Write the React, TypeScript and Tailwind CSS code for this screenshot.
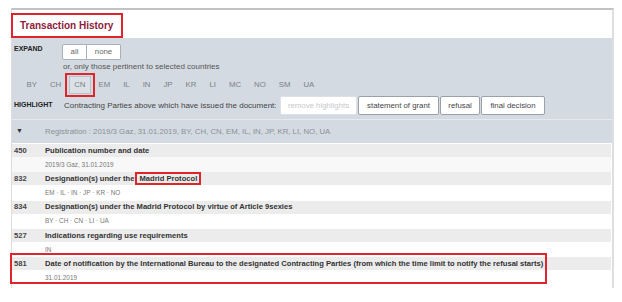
const countries = ["BY", "CH", "CN", "EM", "IL", "IN", "JP", "KR", "LI", "MC", "NO", "SM", "UA"];

const rows = [
  { code: "450", title: "Publication number and date", sub: "2019/3 Gaz, 31.01.2019" },
  { code: "832", title: "Designation(s) under the", mark: "Madrid Protocol", sub: "EM · IL · IN · JP · KR · NO" },
  { code: "834", title: "Designation(s) under the Madrid Protocol by virtue of Article 9sexies", sub: "BY · CH · CN · LI · UA" },
  { code: "527", title: "Indications regarding use requirements", sub: "IN" },
  {
    code: "581",
    title:
      "Date of notification by the International Bureau to the designated Contracting Parties (from which the time limit to notify the refusal starts)",
    sub: "31.01.2019",
    boxed: true,
  },
];

const Btn = ({ label, disabled, w }: { label: string; disabled?: boolean; w: string }) => (
  <div
    className={`${w} h-[19px] flex items-center justify-center rounded-[2px] border bg-white text-[7.8px] ${
      disabled ? "border-[#dde1e5] text-[#c4c8cc]" : "border-[#9aa1a8] text-[#444]"
    }`}
  >
    {label}
  </div>
);

export default function App() {
  return (
    <div
      className="w-[622px] h-[302px] bg-white overflow-hidden pt-[8px] pl-[11px]"
      style={{ fontFamily: '"Liberation Sans", Arial, sans-serif' }}
    >
      <div className="w-[603px] h-[280px] border-t-2 border-t-[#c2c2c2] border-l border-l-[#dcdcdc] border-r-2 border-r-[#dedede]">
        {/* title */}
        <div className="h-[28px] pt-[2px] -ml-px">
          <div className="inline-flex items-center w-[112px] h-[25px] border-2 border-[#e0242c] pl-[7px] text-[10px] font-bold text-[#8e1b3c]">
            Transaction History
          </div>
        </div>

        {/* expand / highlight panel */}
        <div className="bg-[#d4dae1] w-[600px]">
          <div className="pt-[6px] pl-[2px] flex items-start h-[22px]">
            <span className="w-[48px] text-[7px] font-bold text-[#222] leading-[10px]">EXPAND</span>
            <div className="flex">
              <div className="w-[25px] h-[16px] flex items-center justify-center bg-white border border-[#a9b0b7] rounded-l-[2px] text-[7.8px] text-[#666]">all</div>
              <div className="w-[34px] h-[16px] flex items-center justify-center bg-white border border-l-0 border-[#a9b0b7] rounded-r-[2px] text-[7.8px] text-[#666]">none</div>
            </div>
          </div>
          <div className="h-[14px] pl-[51px] pt-[2px] text-[8px] text-[#555] leading-[10px]">
            or, only those pertinent to selected countries
          </div>
          <div className="h-[20px] pl-[8px] flex items-center text-[7.8px] text-[#7a8088] mt-[1px]">
            {countries.map((c) => (
              <div key={c} className="relative px-[6.5px] h-[18px] flex items-center">
                {c === "CN" && (
                  <>
                    <div className="absolute inset-y-[0px] left-[1px] right-[1px] border border-[#b9c1ca] bg-[#dbe1e7]" />
                    <div className="absolute -inset-x-[3px] -inset-y-[3px] border-2 border-[#e0242c]" />
                  </>
                )}
                <span className="relative">{c}</span>
              </div>
            ))}
          </div>
          <div className="h-[21px] flex items-center pl-[2px]">
            <span className="w-[50px] text-[7px] font-bold text-[#222]">HIGHLIGHT</span>
            <span className="w-[216px] text-[8px] text-[#444] whitespace-nowrap">Contracting Parties above which have issued the document:</span>
            <div className="flex gap-[1px]">
              <Btn label="remove highlights" disabled w="w-[77px]" />
              <Btn label="statement of grant" w="w-[81px]" />
              <Btn label="refusal" w="w-[40px]" />
              <Btn label="final decision" w="w-[64px]" />
            </div>
          </div>
          <div className="h-[3px]" />
          <div className="h-[1px] bg-[#e6eaee]" />
          <div className="h-[23px] flex items-center pl-[4px] text-[7.8px] text-[#8a9098]">
            <span className="w-[29px] text-[7px] text-[#333]">▼</span>
            <span>Registration : 2019/3 Gaz, 31.01.2019, BY, CH, CN, EM, IL, IN, JP, KR, LI, NO, UA</span>
          </div>
        </div>

        {/* entries */}
        <div className="pt-[1px]">
          {rows.map((r, i) => (
            <div key={r.code} className="relative">
              <div className="h-[13px] w-[599px] bg-[#ececec] flex items-center pl-[2px] text-[7.6px] font-bold text-[#333] whitespace-nowrap">
                <span className="w-[31px] text-[#444]">{r.code}</span>
                <span>{r.title}</span>
                {r.mark && (
                  <span className="ml-[1px] inline-block border-2 border-[#e0242c] px-[2px] leading-[9px]">{r.mark}</span>
                )}
              </div>
              <div
                className={`h-[15.25px] flex items-center pl-[33px] text-[6.4px] text-[#777] ${
                  i === 0 ? "bg-[#f8f8f8] w-[599px]" : ""
                }`}
              >
                {r.sub}
              </div>
              {r.boxed && <div className="absolute -left-[2px] -top-[4px] w-[537px] h-[31px] border-2 border-[#e0242c]" />}
            </div>
          ))}
        </div>
      </div>
    </div>
  );
}
